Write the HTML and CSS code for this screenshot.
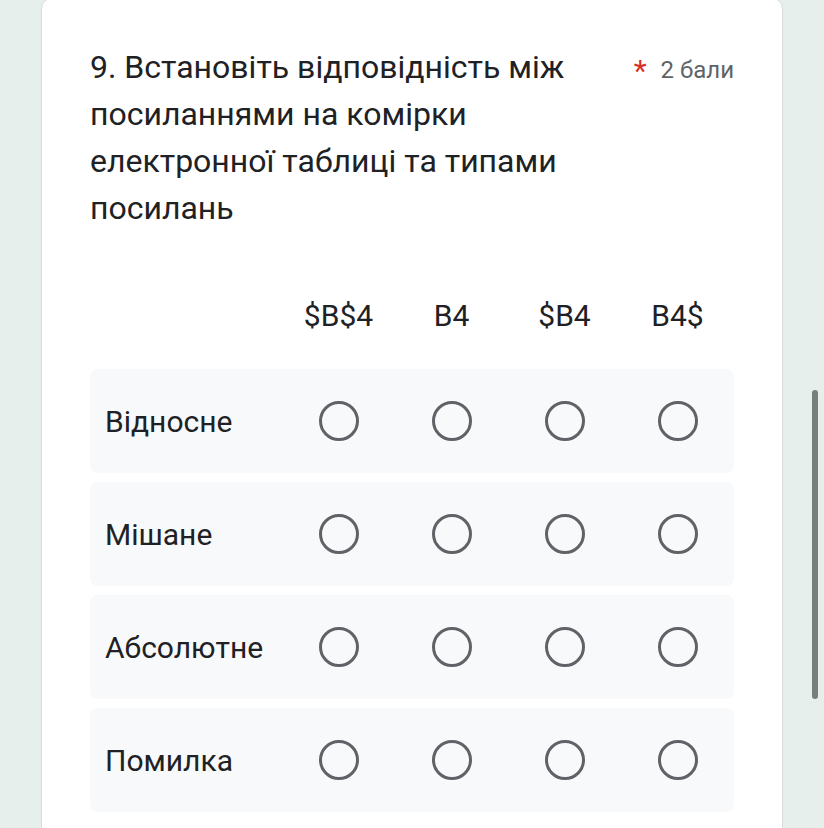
FILE: index.html
```html
<!DOCTYPE html>
<html lang="uk">
<head>
<meta charset="utf-8">
<title>Питання 9</title>
<link rel="stylesheet" href="styles.css">
</head>
<body>
<div class="card">
  <div class="q-head">
    <div class="q-title">9. Встановіть відповідність між посиланнями на комірки електронної таблиці та типами посилань</div>
    <div class="q-points"><span class="req">*</span> 2 бали</div>
  </div>
  <div class="grid">
    <div class="grid-head">
      <div class="cell-label"></div>
      <div class="col-h">$B$4</div>
      <div class="col-h">B4</div>
      <div class="col-h">$B4</div>
      <div class="col-h">B4$</div>
    </div>
    <div class="grid-row">
      <div class="cell-label">Відносне</div>
      <div class="cell"><span class="radio"></span></div>
      <div class="cell"><span class="radio"></span></div>
      <div class="cell"><span class="radio"></span></div>
      <div class="cell"><span class="radio"></span></div>
    </div>
    <div class="grid-row">
      <div class="cell-label">Мішане</div>
      <div class="cell"><span class="radio"></span></div>
      <div class="cell"><span class="radio"></span></div>
      <div class="cell"><span class="radio"></span></div>
      <div class="cell"><span class="radio"></span></div>
    </div>
    <div class="grid-row">
      <div class="cell-label">Абсолютне</div>
      <div class="cell"><span class="radio"></span></div>
      <div class="cell"><span class="radio"></span></div>
      <div class="cell"><span class="radio"></span></div>
      <div class="cell"><span class="radio"></span></div>
    </div>
    <div class="grid-row">
      <div class="cell-label">Помилка</div>
      <div class="cell"><span class="radio"></span></div>
      <div class="cell"><span class="radio"></span></div>
      <div class="cell"><span class="radio"></span></div>
      <div class="cell"><span class="radio"></span></div>
    </div>
  </div>
</div>
<div class="scrollbar"></div>
</body>
</html>
```
FILE: styles.css
```css
html, body {
  margin: 0;
  padding: 0;
}
body {
  background: #e7efec;
  font-family: Roboto, "Noto Sans", Arial, sans-serif;
  color: #202124;
  height: 828px;
  overflow: hidden;
}
.card {
  margin: -3px 41px 0 41px;
  background: #fff;
  border: 1px solid #dadce0;
  border-radius: 12px;
  padding: 46px 48px 0 48px;
  height: 860px;
}
.q-head {
  display: flex;
  align-items: flex-start;
}
.q-title {
  flex: 1;
  font-size: 32px;
  line-height: 47px;
  color: #202124;
  margin-right: 20px;
}
.q-points {
  font-size: 24px;
  color: #5f6368;
  white-space: nowrap;
  margin-top: 10px;
  line-height: 32px;
}
.req {
  color: #d93025;
  font-size: 30px;
  vertical-align: -3px;
  margin-right: 8px;
}
.grid {
  margin-top: 53px;
  display: flex;
  flex-direction: column;
  gap: 9px;
}
.grid-head, .grid-row {
  display: grid;
  grid-template-columns: 192px repeat(4, 1fr);
  align-items: center;
}
.grid-head {
  height: 60px;
  margin-bottom: 15px;
}
.col-h {
  text-align: center;
  font-size: 30px;
  color: #202124;
}
.grid-row {
  height: 104px;
  background: #f8f9fa;
  border-radius: 8px;
}
.grid-row .cell-label {
  padding-left: 15px;
  font-size: 30px;
  color: #202124;
}
.cell {
  display: flex;
  justify-content: center;
  align-items: center;
}
.radio {
  display: block;
  width: 40px;
  height: 40px;
  box-sizing: border-box;
  border: 3.5px solid #5f6368;
  border-radius: 50%;
}
.scrollbar {
  position: fixed;
  left: 812px;
  top: 390px;
  width: 6px;
  height: 309px;
  background: #787e7b;
  border-radius: 3px;
}
```
